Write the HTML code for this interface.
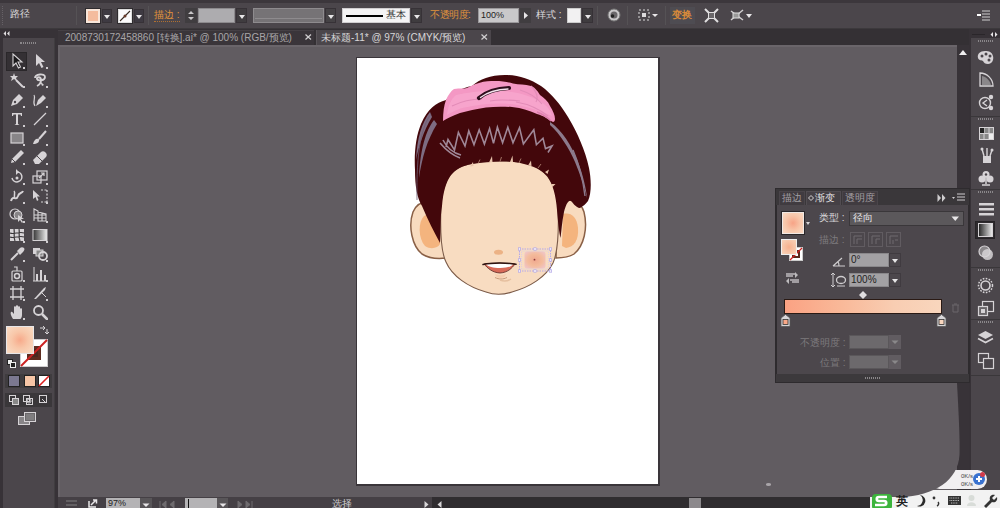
<!DOCTYPE html>
<html><head><meta charset="utf-8">
<style>
*{margin:0;padding:0;box-sizing:border-box}
html,body{width:1000px;height:508px;overflow:hidden;background:#615c61;font-family:"Liberation Sans",sans-serif;position:relative}
.a{position:absolute}
.t{position:absolute;white-space:nowrap;line-height:1}
.dd{position:absolute;background:#3f3c3f;border:1px solid #373237}
.dd:after{content:"";position:absolute;left:50%;top:50%;margin-left:-3px;margin-top:-1px;border-left:3px solid transparent;border-right:3px solid transparent;border-top:4px solid #e8e6e8}
.sep{position:absolute;top:6px;width:1px;height:19px;background:#3a373a;border-right:1px solid #555255}
svg{position:absolute;overflow:visible}
</style></head><body>
<!-- ============ top control bar ============ -->
<div class="a" style="left:0;top:0;width:1000px;height:3px;background:#3c373c"></div>
<div class="a" style="left:0;top:3px;width:1000px;height:26px;background:#4b464b;border-bottom:1px solid #3c393c"></div>
<div class="t" style="left:10px;top:9px;font-size:10px;color:#dcdadc">路径</div><div class="a" style="left:2px;top:6px;width:2px;height:19px;border-left:1px dotted #666166"></div>
<div class="sep" style="left:76px"></div>
<!-- fill swatch -->
<div class="a" style="left:86px;top:9px;width:14px;height:14px;background:#f4bc9e;border:2px solid #f8e6da;outline:1px solid #2e2b2e"></div>
<div class="dd" style="left:102px;top:9px;width:10px;height:14px;background:#3e3a42"></div>
<!-- stroke swatch -->
<div class="a" style="left:118px;top:9px;width:14px;height:14px;background:#fbfafb;border:1px solid #ddd;outline:1px solid #2e2b2e"></div>
<svg style="left:118px;top:9px" width="14" height="14"><line x1="2" y1="12" x2="12" y2="2" stroke="#3a2a22" stroke-width="1.1"/><circle cx="7" cy="7" r="1.5" fill="#6a3a2a"/></svg>
<div class="dd" style="left:134px;top:9px;width:10px;height:14px;background:#3e3a42"></div>
<div class="sep" style="left:148px"></div>
<div class="t" style="left:154px;top:10px;font-size:10px;color:#e0933c;border-bottom:1px dotted #b07030;padding-bottom:1px">描边 :</div>
<div class="a" style="left:185px;top:8px;width:12px;height:15px;background:#403d40"></div>
<svg style="left:185px;top:8px" width="12" height="15"><path d="M3 6 L6 3 L9 6Z M3 9 L6 12 L9 9Z" fill="#c8c6c8"/></svg>
<div class="a" style="left:198px;top:8px;width:37px;height:15px;background:#adacaf;border:1px solid #8c8a8d"></div>
<div class="dd" style="left:236px;top:8px;width:11px;height:15px"></div>
<!-- width profile -->
<div class="a" style="left:253px;top:8px;width:71px;height:15px;background:#767376;border:1px solid #8e8b8e"></div>
<div class="a" style="left:255px;top:18px;width:67px;height:1px;background:#8e8b8e"></div>
<div class="dd" style="left:325px;top:8px;width:11px;height:15px;background:#454245"></div>
<!-- stroke style -->
<div class="a" style="left:342px;top:8px;width:68px;height:15px;background:#f4f3f4;border:1px solid #cfcdcf"></div>
<div class="a" style="left:346px;top:15px;width:37px;height:2px;background:#000"></div>
<div class="t" style="left:386px;top:10px;font-size:10px;color:#333">基本</div>
<div class="dd" style="left:411px;top:8px;width:11px;height:15px"></div>
<div class="t" style="left:430px;top:10px;font-size:10px;letter-spacing:-.5px;color:#e0933c">不透明度:</div>
<div class="a" style="left:478px;top:8px;width:41px;height:15px;background:#c9c8ca;border:1px solid #9b999c"></div>
<div class="t" style="left:481px;top:11px;font-size:9px;color:#222">100%</div>
<div class="a" style="left:520px;top:8px;width:11px;height:15px;background:#403d40"></div>
<svg style="left:520px;top:8px" width="11" height="15"><path d="M4 4 L8 7.5 L4 11Z" fill="#e8e6e8"/></svg>
<div class="t" style="left:536px;top:10px;font-size:10px;color:#dcdadc">样式 :</div>
<div class="a" style="left:567px;top:8px;width:14px;height:15px;background:#f2f1f2;border:1px solid #ccc"></div>
<div class="dd" style="left:582px;top:8px;width:11px;height:15px"></div>
<div class="sep" style="left:597px"></div>
<svg style="left:607px;top:8px" width="14" height="14"><circle cx="7" cy="7" r="6" fill="#c9c7c9" stroke="#777" stroke-width="1"/><circle cx="7" cy="7" r="3.5" fill="#6a676a"/><circle cx="5.5" cy="8" r="1.8" fill="#222"/></svg>
<div class="sep" style="left:627px"></div>
<svg style="left:637px;top:8px" width="22" height="14"><rect x="2" y="2" width="10" height="10" fill="none" stroke="#dcdadc" stroke-dasharray="2 2"/><rect x="5" y="5" width="4" height="4" fill="#dcdadc"/><path d="M15 6 L21 6 L18 9Z" fill="#e8e6e8"/></svg>
<div class="sep" style="left:665px"></div>
<div class="a" style="left:670px;top:7px;width:25px;height:17px;background:#4e4c52"></div>
<div class="t" style="left:672px;top:10px;font-size:10px;color:#d88a3a;font-weight:bold">变换</div>
<svg style="left:704px;top:8px" width="15" height="15"><path d="M1 1 L5 5 M14 1 L10 5 M1 14 L5 10 M14 14 L10 10" stroke="#e0dee0" stroke-width="2"/><rect x="4.5" y="4.5" width="6" height="6" fill="#6a676a" stroke="#e0dee0"/></svg>
<svg style="left:729px;top:8px" width="24" height="15"><path d="M2 3 L14 12 M14 2 L2 12" stroke="#d0ced0" stroke-width="1.5"/><rect x="4" y="5" width="6" height="5" fill="#999" stroke="#ddd"/><path d="M17 6 L23 6 L20 10Z" fill="#e8e6e8"/></svg>
<svg style="left:977px;top:9px" width="14" height="13"><path d="M5 2 H13 M5 5 H13 M5 8 H13 M5 11 H13" stroke="#cfcdcf" stroke-width="1"/><path d="M0 6 L4 6" stroke="#fff" stroke-width="2"/></svg>

<!-- ============ tab bar ============ -->
<div class="a" style="left:58px;top:29px;width:911px;height:16px;background:#343034"></div>
<div class="a" style="left:58px;top:30px;width:256px;height:15px;background:#3a353a;border-top:1px solid #454045"></div>
<div class="t" style="left:65px;top:33px;font-size:10px;color:#a8a5a8">2008730172458860 [转换].ai* @ 100% (RGB/预览)</div>
<svg style="left:305px;top:34px" width="7" height="6"><path d="M0.5 0.5 L6 5.5 M6 0.5 L0.5 5.5" stroke="#d0ced0" stroke-width="1.2"/></svg>
<div class="a" style="left:316px;top:30px;width:175px;height:15px;background:#4b464b;border-left:1px solid #5a555a"></div>
<div class="t" style="left:321px;top:33px;font-size:10px;color:#d8d6d8">未标题-11* @ 97% (CMYK/预览)</div>
<svg style="left:481px;top:34px" width="7" height="6"><path d="M0.5 0.5 L6 5.5 M6 0.5 L0.5 5.5" stroke="#d0ced0" stroke-width="1.2"/></svg>

<!-- ============ canvas ============ -->
<div class="a" style="left:58px;top:45px;width:899px;height:452px;background:#615c61;border-top:2px solid #6a656a;border-left:2px solid #686368"></div>
<div class="a" style="left:356px;top:57px;width:304px;height:429px;background:#3a353a"></div>
<div class="a" style="left:357px;top:58px;width:301px;height:426px;background:#fff"></div>
<!-- face illustration -->
<svg style="left:0;top:0" width="1000" height="508" viewBox="0 0 1000 508">
<defs>
<radialGradient id="blush" cx="50%" cy="50%" r="60%"><stop offset="0" stop-color="#f0a88e"/><stop offset=".6" stop-color="#f4bc9c"/><stop offset="1" stop-color="#f0c4c4"/></radialGradient>
</defs>
<!-- ears -->
<path d="M443 205 C430 200 418 200 413 212 C408 226 412 246 422 254 C430 259 438 259 446 258 Z" fill="#f8dbbf" stroke="#8a6046" stroke-width="1.5"/>
<path d="M424 216 C418 222 418 238 425 246 C431 250 438 248 440 244 L440 218 C436 213 428 213 424 216Z" fill="#f4b47e"/>
<path d="M557 202 C568 198 580 199 584 212 C588 228 584 246 574 254 C568 258 562 258 556 258 Z" fill="#f8dbbf" stroke="#8a6046" stroke-width="1.5"/>
<path d="M563 214 C570 212 577 216 578 228 C579 240 574 247 566 248 L562 246 Z" fill="#f4b47e"/>
<!-- face -->
<path d="M441 205 C440 230 441 252 446 262 C452 276 468 287 486 292 C494 295 503 295 512 292 C530 287 546 277 553 263 C558 252 559 230 558 205 C556 185 548 168 525 163 C505 159 480 160 462 166 C448 172 442 188 441 205Z" fill="#f8dcc1" stroke="#7a5a48" stroke-width="1.1"/>
<!-- hair -->
<path d="M446 100 C436 103 428 108 421 124 C416 136 414 152 415 170 C415 186 417 198 422 206 C428 220 434 232 440 243 C441 230 440 218 442 206 C443 192 446 182 451 175 C456 169 462 166 472 164 C485 162 500 161 514 162 C528 164 540 168 547 176 C553 184 556 196 557 210 C558 222 559 232 560.5 238 C561.5 230 562 222 564 212 C566 204 569 198 572 202 C575 206 578 208 580 208 C583 206 586 204 588 201 C592 192 591 178 589 168 C585 150 578 134 568 117 C560 104 552 94 541 86 C530 79 518 75 505 75 C490 75 480 79 472 86 C462 88 452 92 446 100Z" fill="#43070b"/>
<!-- hair highlights -->
<path d="M430 112 C422 122 417 138 416 160 C419 146 423 132 432 117Z" fill="#7e6c82"/>
<path d="M434 120 C426 130 420 150 419 178 C422 158 427 140 437 124Z" fill="#7e6c82"/>
<path d="M431 114 C422 126 416 150 417 200" stroke="#6e5c72" stroke-width=".8" fill="none"/>
<path d="M550 122 C562 130 572 146 578 162 C583 175 586 188 587 198 C584 186 580 174 575 162 C569 148 560 134 550 125Z" fill="#8c7a8c"/>
<path d="M573 150 C579 164 583 180 585 196" stroke="#8c7a8c" stroke-width="1.4" fill="none"/>
<!-- zigzag bangs -->
<path d="M440 143 C446 150 452 155 460 158 M443 140 C447 148 453 153 461 155 M446 147 L448 139.5 L454.5 150 L458.4 132.4 L465 146 L468.8 131 L474 144.7 L479.2 129.8 L484.4 144 L489.6 128.5 L493.5 143.4 L497.4 127.2 L502.6 142.8 L507.8 127.2 L513 142.8 L519.5 127.8 L523.4 144 L533.8 129.8 L536.4 144.7 L543 138.2 L545.5 148.6 L552 146 L548 152.5" stroke="#a08898" stroke-width="1.6" fill="none" stroke-linejoin="miter"/>
<!-- forehead hairline wisps -->
<path d="M470 166.5 L473 162 L473.5 166Z M489 162.5 L492 156 L492.5 162Z M510 162 L512.5 155.5 L513 162Z M528 165.5 L531 160.5 L531.5 166Z M545 172 L549 169.5 L547.5 174Z M551 184 L555.5 184 L552.5 187Z" fill="#e8c4ac"/>
<path d="M478 164 L480 159.5 M500 161.5 L501.5 157 M519 163 L521 158.5 M538 168 L541 164" stroke="#e0b8a0" stroke-width=".6"/>
<!-- bow -->
<path d="M443 121 C443 112 444 105 446 100 C448 95 451 91 454 89 C460 88 464 89 467 88 C471 86 474 84 479 83 C485 81 490 81 495 81 C502 81 508 82 513 83.5 C519 85 525 84 531 86 C536 88 538 92 540 95 C544 98 548 101 550 106 C553 111 555 115 555 119 C555 121 554 122 553 122 C548 119 544 116 537 114 C530 111 522 108 512 107 C502 106.5 494 106.5 486 107.5 C476 109 468 111 460 113 C453 116 447 118 443 121Z" fill="#f498c4"/>
<path d="M456 95 C470 92 486 90 502 91 C518 92 532 96 544 104 C549 108 551 112 552 116 C543 112 532 108 518 105 C500 102 480 104 462 108 C456 110 450 113 447 115 C448 106 451 99 456 95Z" fill="#f9aed4" opacity=".55"/>
<path d="M452 106 C462 101 472 99 482 99 M520 90 C530 93 537 98 542 104 M516 102 C528 104 538 108 548 116 M490 101 C500 99 510 100 520 101 M531 86 C537 92 538 98 536 102" stroke="#e38cb8" stroke-width="1.1" fill="none"/>
<path d="M537 112 C542 114 547 117 551 121" stroke="#dc7eac" stroke-width="1.4" fill="none"/>
<!-- hair clip -->
<path d="M479 98 C486 92 497 88.5 509 88" stroke="#2e0e1c" stroke-width="4.2" fill="none" stroke-linecap="round"/>
<path d="M480.5 97.5 C487 92.5 497 89.5 508 89" stroke="#f4e4ee" stroke-width="1.4" fill="none" stroke-linecap="round"/>
<!-- nose -->
<ellipse cx="498.5" cy="252.3" rx="4.5" ry="2.5" fill="#ecb285"/>
<!-- mouth -->
<path d="M484 264 C493 262.8 506 262.8 515 264 C512 268 508 272.5 500 273 C492 272.5 487.5 268 484 264Z" fill="#d86a58" stroke="#5a2a26" stroke-width=".8"/>
<path d="M486 264.3 C494 263.4 506 263.4 513 264.3 C511.5 266.8 507 268 500 268 C493 268 488.5 266.8 486 264.3Z" fill="#fff"/>
<path d="M483 264.5 C492 262.6 507 262.6 516 264.3" stroke="#2e1410" stroke-width="1.5" fill="none" stroke-linecap="round"/>
<path d="M495 274 C499 275.5 503 275.5 506 274 C505 277 503 278 500.5 278 C498 278 496 277 495 274Z" fill="#f6cfb0"/>
<path d="M495 277.5 C499 279.5 503 279.5 507 277.5" stroke="#c89c7c" stroke-width="1" fill="none"/>
<path d="M500 280 C504 281.5 508 281 511 279" stroke="#e6c0a0" stroke-width="1.5" fill="none"/>
<!-- blush w/ selection -->
<rect x="524.5" y="251.5" width="21" height="17" rx="3" fill="url(#blush)"/>
<circle cx="534.5" cy="259.7" r=".9" fill="#8a3a3a"/>
<rect x="519.5" y="249" width="31" height="22" fill="none" stroke="#b4a8ea" stroke-width="1" stroke-dasharray="1.5 1"/>
<rect x="521.5" y="251" width="27" height="18" fill="none" stroke="#d0c8f2" stroke-width=".7" stroke-dasharray="1 1"/>
<g fill="#f4f2fc" stroke="#a89ce4" stroke-width=".6">
<rect x="518.3" y="247.8" width="2.4" height="2.4"/><rect x="533.8" y="247.8" width="2.4" height="2.4"/><rect x="549.3" y="247.8" width="2.4" height="2.4"/>
<rect x="518.3" y="258.8" width="2.4" height="2.4"/><rect x="549.3" y="258.8" width="2.4" height="2.4"/>
<rect x="518.3" y="269.8" width="2.4" height="2.4"/><rect x="533.8" y="269.8" width="2.4" height="2.4"/><rect x="549.3" y="269.8" width="2.4" height="2.4"/>
</g>
</svg>

<!-- vertical scrollbar -->
<div class="a" style="left:957px;top:45px;width:13px;height:452px;background:#383338"></div>
<svg style="left:957px;top:47px" width="12" height="10"><path d="M2 8 L6 3 L10 8Z" fill="#f0eef0"/></svg>

<!-- ============ status bar ============ -->
<div class="a" style="left:58px;top:497px;width:899px;height:11px;background:#302d30"></div>
<div class="a" style="left:58px;top:497px;width:374px;height:11px;background:#454045"></div>
<svg style="left:64px;top:499px" width="15" height="9"><path d="M2 2 H13 M2 6 H13" stroke="#6e6b6e" stroke-width="1.5"/></svg>
<svg style="left:88px;top:498px" width="10" height="10"><path d="M1 3 V9 H8" stroke="#e8e6e8" stroke-width="1.5" fill="none"/><path d="M3 7 L8 2 M5 2 H8.5 V5.5" stroke="#e8e6e8" stroke-width="1.5" fill="none"/></svg>
<div class="a" style="left:106px;top:498px;width:34px;height:10px;background:#b4b3b5"></div>
<div class="t" style="left:108px;top:499px;font-size:9px;color:#222">97%</div>
<div class="a" style="left:140px;top:498px;width:12px;height:10px;background:#585558"></div>
<svg style="left:142px;top:503px" width="8" height="5"><path d="M0.5 0.5 L7.5 0.5 L4 4Z" fill="#e8e6e8"/></svg>
<svg style="left:159px;top:501px" width="17" height="7"><path d="M1 0 V7 M7 0 L3 3.5 L7 7Z M15 0 L11 3.5 L15 7Z" stroke="#6e6b6e" fill="#6e6b6e"/></svg>
<div class="a" style="left:185px;top:498px;width:32px;height:10px;background:#b4b3b5"></div>
<div class="a" style="left:188px;top:499px;width:1px;height:9px;background:#111"></div>
<div class="a" style="left:217px;top:498px;width:11px;height:10px;background:#585558"></div>
<svg style="left:219px;top:503px" width="8" height="5"><path d="M0.5 0.5 L7.5 0.5 L4 4Z" fill="#e8e6e8"/></svg>
<svg style="left:236px;top:501px" width="17" height="7"><path d="M2 0 L6 3.5 L2 7Z M10 0 L14 3.5 L10 7Z M16 0 V7" stroke="#6e6b6e" fill="#6e6b6e"/></svg>
<div class="t" style="left:332px;top:499px;font-size:10px;color:#cfcdcf">选择</div>
<svg style="left:424px;top:501px" width="20" height="7"><path d="M0.5 0 L4.5 3.5 L0.5 7Z M17.5 0 L13.5 3.5 L17.5 7Z" fill="#d8d6d8"/></svg>
<div class="a" style="left:689px;top:498px;width:12px;height:10px;background:#8c898c"></div>

<!-- ============ left toolbar ============ -->
<div class="a" style="left:0;top:29px;width:58px;height:479px;background:#373237"></div>
<div class="a" style="left:3px;top:38px;width:52px;height:470px;background:#4b464b;border-right:1px solid #403d40"></div>
<svg style="left:3px;top:31px" width="7" height="5"><path d="M3 0 L0.5 2.5 L3 5Z M6.5 0 L4 2.5 L6.5 5Z" fill="#e0dee0"/></svg>
<div class="a" style="left:20px;top:42px;width:16px;height:2px;border-top:1px dotted #8a878a;border-bottom:1px dotted #8a878a"></div>
<div class="a" style="left:6px;top:52px;width:21px;height:19px;background:#343034;border:1px solid #2a272a"></div>
<svg style="left:9px;top:53px" width="16" height="16" viewBox="0 0 16 16"><path d="M4 1 L4 13 L7 10 L9.5 15 L11.5 14 L9 9 L13 9 Z" fill="#1a181a" stroke="#d6d3d6" stroke-width="1.1"/></svg>
<svg style="left:32px;top:53px" width="16" height="16" viewBox="0 0 16 16"><path d="M4 1 L4 13 L7 10 L9.5 15 L11.5 14 L9 9 L13 9 Z" fill="#d6d3d6"/></svg>
<div class="a" style="left:23px;top:67px;width:2px;height:2px;background:#cfcccf"></div>
<div class="a" style="left:46px;top:67px;width:2px;height:2px;background:#cfcccf"></div>
<svg style="left:9px;top:72px" width="16" height="16" viewBox="0 0 16 16"><path d="M7 8 L14 15" stroke="#d6d3d6" stroke-width="2"/><path d="M5 1 L6 4 L9 4 L7 6 L8 9 L5 7 L2 9 L3 6 L1 4 L4 4Z" fill="#d6d3d6"/></svg>
<svg style="left:32px;top:72px" width="16" height="16" viewBox="0 0 16 16"><path d="M3 6 C3 2 13 1 13 5 C13 9 6 9 5 7 C4 5 9 4 9 8 C9 11 7 13 5 14" stroke="#d6d3d6" stroke-width="1.8" fill="none"/><path d="M8 9 L12 13 L10 14Z" fill="#d6d3d6"/></svg>
<div class="a" style="left:23px;top:86px;width:2px;height:2px;background:#cfcccf"></div>
<div class="a" style="left:46px;top:86px;width:2px;height:2px;background:#cfcccf"></div>
<svg style="left:9px;top:92px" width="16" height="16" viewBox="0 0 16 16"><path d="M2 14 L4 8 L10 2 L14 6 L8 12 Z" fill="#d6d3d6"/><circle cx="6" cy="10" r="1.2" fill="#4b464b"/></svg>
<svg style="left:32px;top:92px" width="16" height="16" viewBox="0 0 16 16"><path d="M4 14 L6 8 L11 3 L14 6 L9 11 Z" fill="#d6d3d6"/><path d="M3 14 C0 10 4 6 2 3" stroke="#d6d3d6" stroke-width="1.2" fill="none"/></svg>
<div class="a" style="left:23px;top:106px;width:2px;height:2px;background:#cfcccf"></div>
<div class="a" style="left:46px;top:106px;width:2px;height:2px;background:#cfcccf"></div>
<svg style="left:9px;top:111px" width="16" height="16" viewBox="0 0 16 16"><path d="M3 2 H13 V5 H12 L11.5 3.5 H9 V13 L10.5 14 H5.5 L7 13 V3.5 H4.5 L4 5 H3Z" fill="#d6d3d6"/></svg>
<svg style="left:32px;top:111px" width="16" height="16" viewBox="0 0 16 16"><path d="M2 14 L14 2" stroke="#d6d3d6" stroke-width="1.3"/></svg>
<div class="a" style="left:23px;top:125px;width:2px;height:2px;background:#cfcccf"></div>
<div class="a" style="left:46px;top:125px;width:2px;height:2px;background:#cfcccf"></div>
<svg style="left:9px;top:130px" width="16" height="16" viewBox="0 0 16 16"><rect x="2" y="3" width="12" height="10" fill="#888588" stroke="#d6d3d6" stroke-width="1.2"/></svg>
<svg style="left:32px;top:130px" width="16" height="16" viewBox="0 0 16 16"><path d="M14 1 L7 9" stroke="#d6d3d6" stroke-width="2"/><path d="M1 14 C2 10 4 8 7 9 C8 12 5 14 1 14Z" fill="#d6d3d6"/></svg>
<div class="a" style="left:23px;top:144px;width:2px;height:2px;background:#cfcccf"></div>
<div class="a" style="left:46px;top:144px;width:2px;height:2px;background:#cfcccf"></div>
<svg style="left:9px;top:149px" width="16" height="16" viewBox="0 0 16 16"><path d="M2 14 L3 10 L12 1 L15 4 L6 13Z" fill="#d6d3d6"/><path d="M3 10 L6 13" stroke="#4b464b"/></svg>
<svg style="left:32px;top:149px" width="16" height="16" viewBox="0 0 16 16"><path d="M1 11 L9 3 C10 2 12 2 13 3 L14 4 C15 5 15 7 14 8 L7 15 L3 15 Z" fill="#d6d3d6"/><path d="M5 7 L10 12" stroke="#4b464b"/></svg>
<div class="a" style="left:23px;top:163px;width:2px;height:2px;background:#cfcccf"></div>
<div class="a" style="left:46px;top:163px;width:2px;height:2px;background:#cfcccf"></div>
<svg style="left:9px;top:169px" width="16" height="16" viewBox="0 0 16 16"><path d="M3 9 A5 5 0 1 0 7 3" stroke="#d6d3d6" stroke-width="1.5" fill="none"/><path d="M7 0 L10 3 L7 6Z" fill="#d6d3d6"/><circle cx="8" cy="9" r="1.5" fill="#d6d3d6"/></svg>
<svg style="left:32px;top:169px" width="16" height="16" viewBox="0 0 16 16"><rect x="1" y="7" width="8" height="7" fill="none" stroke="#d6d3d6" stroke-width="1.2"/><rect x="5" y="2" width="10" height="9" fill="none" stroke="#d6d3d6" stroke-width="1.2"/><path d="M7 9 L12 4 M9 4 H12 V7" stroke="#d6d3d6" stroke-width="1.2" fill="none"/></svg>
<div class="a" style="left:23px;top:183px;width:2px;height:2px;background:#cfcccf"></div>
<div class="a" style="left:46px;top:183px;width:2px;height:2px;background:#cfcccf"></div>
<svg style="left:9px;top:188px" width="16" height="16" viewBox="0 0 16 16"><path d="M2 13 C4 6 7 14 9 8 C10 4 13 6 14 3" stroke="#d6d3d6" stroke-width="2" fill="none"/><path d="M5 3 C7 5 4 8 6 10" stroke="#d6d3d6" stroke-width="1.5" fill="none"/></svg>
<svg style="left:32px;top:188px" width="16" height="16" viewBox="0 0 16 16"><path d="M1 2 L1 11 L3.5 9 L5 13 L6.5 12 L5 8.5 L8 8.5Z" fill="#d6d3d6"/><path d="M9 2 H15 M9 14 H15 M15 2 V14" stroke="#d6d3d6" stroke-width="1.2" stroke-dasharray="2 1.5"/></svg>
<div class="a" style="left:23px;top:202px;width:2px;height:2px;background:#cfcccf"></div>
<div class="a" style="left:46px;top:202px;width:2px;height:2px;background:#cfcccf"></div>
<svg style="left:9px;top:207px" width="16" height="16" viewBox="0 0 16 16"><circle cx="6" cy="7" r="5" fill="none" stroke="#d6d3d6" stroke-width="1.2"/><circle cx="9" cy="8" r="4" fill="#888588" stroke="#d6d3d6" stroke-width="1"/><path d="M9 8 L9 15 L11 13 L13 16 L14 15 L12 12 L15 12Z" fill="#d6d3d6"/></svg>
<svg style="left:32px;top:207px" width="16" height="16" viewBox="0 0 16 16"><path d="M2 14 V2 L6 4 V14 M6 14 V5 L14 7 V14 Z M2 8 H14 M2 11 H14 M10 6 V14" stroke="#d6d3d6" stroke-width="1.1" fill="none"/></svg>
<div class="a" style="left:23px;top:221px;width:2px;height:2px;background:#cfcccf"></div>
<div class="a" style="left:46px;top:221px;width:2px;height:2px;background:#cfcccf"></div>
<svg style="left:9px;top:227px" width="16" height="16" viewBox="0 0 16 16"><rect x="1" y="2" width="14" height="12" fill="#d6d3d6"/><path d="M1 6 C5 8 10 4 15 6 M1 10 C5 12 10 8 15 10 M5 2 C6 6 4 10 6 14 M10 2 C11 6 9 10 11 14" stroke="#3a373a" stroke-width="1.2" fill="none"/></svg>
<svg style="left:32px;top:227px" width="16" height="16" viewBox="0 0 16 16"><defs><linearGradient id="tg" x1="0" x2="1"><stop offset="0" stop-color="#333"/><stop offset="1" stop-color="#eee"/></linearGradient></defs><rect x="1" y="2.5" width="14" height="11" fill="url(#tg)" stroke="#d6d3d6" stroke-width="1"/></svg>
<div class="a" style="left:23px;top:241px;width:2px;height:2px;background:#cfcccf"></div>
<div class="a" style="left:46px;top:241px;width:2px;height:2px;background:#cfcccf"></div>
<svg style="left:9px;top:246px" width="16" height="16" viewBox="0 0 16 16"><path d="M2 14 L9 7" stroke="#d6d3d6" stroke-width="2"/><path d="M8 5 L11 2 C12 1 14 1 15 2 C16 3 15 5 14 6 L11 9Z" fill="#d6d3d6"/></svg>
<svg style="left:32px;top:246px" width="16" height="16" viewBox="0 0 16 16"><rect x="1" y="2" width="7" height="6" fill="#d6d3d6"/><rect x="4" y="4" width="7" height="6" fill="#888" stroke="#d6d3d6"/><circle cx="11" cy="10" r="4" fill="none" stroke="#d6d3d6" stroke-width="1.8"/></svg>
<div class="a" style="left:23px;top:260px;width:2px;height:2px;background:#cfcccf"></div>
<div class="a" style="left:46px;top:260px;width:2px;height:2px;background:#cfcccf"></div>
<svg style="left:9px;top:266px" width="16" height="16" viewBox="0 0 16 16"><rect x="3" y="5" width="10" height="10" rx="1" fill="none" stroke="#d6d3d6" stroke-width="1.2"/><circle cx="8" cy="10" r="2.5" fill="none" stroke="#d6d3d6" stroke-width="1.5"/><path d="M5 1 H8 V5" stroke="#d6d3d6" stroke-width="1.2" fill="none"/></svg>
<svg style="left:32px;top:266px" width="16" height="16" viewBox="0 0 16 16"><path d="M1 15 H15 M2 15 V1" stroke="#d6d3d6" stroke-width="1"/><rect x="4" y="8" width="2" height="7" fill="#d6d3d6"/><rect x="8" y="4" width="2" height="11" fill="#d6d3d6"/><rect x="12" y="9" width="2" height="6" fill="#d6d3d6"/></svg>
<div class="a" style="left:23px;top:280px;width:2px;height:2px;background:#cfcccf"></div>
<div class="a" style="left:46px;top:280px;width:2px;height:2px;background:#cfcccf"></div>
<svg style="left:9px;top:285px" width="16" height="16" viewBox="0 0 16 16"><path d="M4 1 V15 M12 1 V15 M1 4 H15 M1 12 H15" stroke="#d6d3d6" stroke-width="1.3"/></svg>
<svg style="left:32px;top:285px" width="16" height="16" viewBox="0 0 16 16"><path d="M2 14 L12 3 L14 2 L13 5 L4 14Z" fill="#d6d3d6"/><path d="M10 8 L14 12" stroke="#d6d3d6" stroke-width="1"/></svg>
<div class="a" style="left:23px;top:299px;width:2px;height:2px;background:#cfcccf"></div>
<div class="a" style="left:46px;top:299px;width:2px;height:2px;background:#cfcccf"></div>
<svg style="left:9px;top:304px" width="16" height="16" viewBox="0 0 16 16"><path d="M4 15 C2 12 1 9 2 8 C3 7 4 9 5 10 V3 C5 2 7 2 7 3 V8 V2 C7 1 9 1 9 2 V8 V3 C9 2 11 2 11 3 V8 V5 C11 4 13 4 13 5 V11 C13 13 12 15 11 15Z" fill="#d6d3d6"/></svg>
<svg style="left:32px;top:304px" width="16" height="16" viewBox="0 0 16 16"><circle cx="6.5" cy="6.5" r="4.5" fill="none" stroke="#d6d3d6" stroke-width="1.8"/><path d="M10 10 L15 15" stroke="#d6d3d6" stroke-width="2.5"/></svg>
<div class="a" style="left:23px;top:318px;width:2px;height:2px;background:#cfcccf"></div>
<div class="a" style="left:46px;top:318px;width:2px;height:2px;background:#cfcccf"></div>

<!-- fill / stroke -->
<div class="a" style="left:20px;top:339px;width:28px;height:28px;background:#fff;border:1px solid #cfcdcf"></div>
<div class="a" style="left:27px;top:346px;width:14px;height:14px;background:#4a2820;border:3px solid #5e2c20"></div>
<svg style="left:20px;top:339px" width="28" height="28"><line x1="1" y1="27" x2="27" y2="1" stroke="#cc2222" stroke-width="2"/></svg>
<div class="a" style="left:6px;top:326px;width:28px;height:28px;border:1px solid #e8e6e8;background:radial-gradient(circle at 50% 50%,#f7a98a 0%,#f8c7a9 45%,#f9dcc5 100%)"></div>
<svg style="left:39px;top:326px" width="9" height="9"><path d="M1 2 H6 L4 0 M6 2 L4 4 M8 3 V8 L6 6 M8 8 L10 6" stroke="#d6d3d6" stroke-width="1" fill="none"/></svg>
<svg style="left:7px;top:359px" width="10" height="9"><rect x="0.5" y="0.5" width="5" height="5" fill="#eee" stroke="#222"/><rect x="3.5" y="3.5" width="5" height="5" fill="#222" stroke="#eee"/></svg>
<!-- modes -->
<div class="a" style="left:5px;top:374px;width:47px;height:14px;background:#3f3c3f"></div>
<div class="a" style="left:8px;top:375px;width:12px;height:12px;background:#7b7890;border:1px solid #222"></div>
<div class="a" style="left:24px;top:375px;width:12px;height:12px;background:#f6c5a6;border:1px solid #222"></div>
<div class="a" style="left:38px;top:375px;width:12px;height:12px;background:#fff;border:1px solid #222"></div>
<svg style="left:38px;top:375px" width="12" height="12"><line x1="1" y1="11" x2="11" y2="1" stroke="#d22" stroke-width="1.6"/></svg>
<div class="a" style="left:5px;top:393px;width:47px;height:14px;background:#3a373a"></div>
<svg style="left:8px;top:394px" width="44" height="12"><g fill="none" stroke="#d6d3d6" stroke-width="1"><rect x="1.5" y="1.5" width="6" height="6"/><rect x="4.5" y="4.5" width="6" height="6" fill="#888"/><rect x="15.5" y="1.5" width="6" height="6"/><rect x="18.5" y="4.5" width="6" height="6"/><circle cx="21" cy="7" r="2"/><rect x="31.5" y="1.5" width="7" height="7"/><path d="M34 5 L38 9"/></g></svg>
<svg style="left:18px;top:412px" width="19" height="14"><rect x="0.5" y="4.5" width="11" height="8" fill="#888588" stroke="#d6d3d6"/><rect x="6.5" y="0.5" width="11" height="9" fill="#6a676a" stroke="#d6d3d6"/><path d="M8 3 H16 M8 5 H16 M8 7 H16" stroke="#aaa" stroke-width=".7"/></svg>

<!-- ============ right dock ============ -->
<div class="a" style="left:969px;top:29px;width:31px;height:479px;background:#373237"></div>
<div class="a" style="left:971px;top:38px;width:29px;height:470px;background:#4b464b"></div>
<svg style="left:990px;top:31.5px" width="8" height="5"><path d="M3 0 L0.5 2.5 L3 5Z M5 0 L7.5 2.5 L5 5Z" fill="#e8e6e8"/></svg><div class="a" style="left:972px;top:34px;width:13px;height:1px;background:#2a262a"></div>
<div class="a" style="left:971px;top:116px;width:29px;height:1px;background:#3a373a"></div>
<div class="a" style="left:971px;top:189px;width:29px;height:1px;background:#3a373a"></div>
<div class="a" style="left:971px;top:267px;width:29px;height:1px;background:#3a373a"></div>
<div class="a" style="left:971px;top:319px;width:29px;height:1px;background:#3a373a"></div>
<div class="a" style="left:971px;top:375px;width:29px;height:1px;background:#3a373a"></div>
<div class="a" style="left:978px;top:40px;width:15px;height:2px;border-top:1px dotted #8a878a;border-bottom:1px dotted #8a878a"></div>
<div class="a" style="left:978px;top:118px;width:15px;height:2px;border-top:1px dotted #8a878a;border-bottom:1px dotted #8a878a"></div>
<div class="a" style="left:978px;top:191px;width:15px;height:2px;border-top:1px dotted #8a878a;border-bottom:1px dotted #8a878a"></div>
<div class="a" style="left:978px;top:269px;width:15px;height:2px;border-top:1px dotted #8a878a;border-bottom:1px dotted #8a878a"></div>
<div class="a" style="left:978px;top:321px;width:15px;height:2px;border-top:1px dotted #8a878a;border-bottom:1px dotted #8a878a"></div>
<!-- palette -->
<svg style="left:977px;top:50px" width="17" height="15"><path d="M8 1 C3 1 0 4 1 8 C2 11 5 10 6 11 C7 13 8 14 11 14 C15 14 17 10 16 6 C15 2 12 1 8 1Z" fill="#d6d3d6"/><circle cx="5" cy="6" r="1.5" fill="#4b464b"/><circle cx="9" cy="4" r="1.5" fill="#4b464b"/><circle cx="13" cy="6" r="1.5" fill="#4b464b"/><circle cx="12" cy="10" r="1.5" fill="#4b464b"/></svg>
<!-- color guide -->
<svg style="left:979px;top:72px" width="15" height="15"><path d="M1 1 V14 H14 C14 7 8 1 1 1Z" fill="none" stroke="#d6d3d6" stroke-width="1.3"/><path d="M3 13 L3 4 C8 5 11 9 12 13Z" fill="#8a878a"/></svg>
<!-- kuler -->
<svg style="left:978px;top:94px" width="16" height="17"><circle cx="7" cy="9" r="5.5" fill="none" stroke="#d6d3d6" stroke-width="1.4"/><path d="M9 6 L5 9 L9 12" stroke="#d6d3d6" stroke-width="1.4" fill="none"/><circle cx="13" cy="3" r="2.2" fill="#d6d3d6"/><circle cx="13" cy="14" r="2.2" fill="#d6d3d6"/></svg>
<!-- swatches -->
<svg style="left:979px;top:127px" width="15" height="13"><rect x="0.5" y="0.5" width="14" height="12" fill="#888" stroke="#d6d3d6"/><path d="M5 0 V13 M10 0 V13 M0 6.5 H15" stroke="#d6d3d6"/><rect x="1" y="1" width="4" height="5" fill="#222"/><rect x="10" y="7" width="4" height="5" fill="#eee"/></svg>
<!-- brushes -->
<svg style="left:979px;top:147px" width="15" height="17"><rect x="4" y="9" width="8" height="7" fill="#d6d3d6"/><path d="M5 9 L3 2 M8 9 V1 M11 9 L13 3" stroke="#d6d3d6" stroke-width="1.4"/><circle cx="3" cy="2" r="1.5" fill="#d6d3d6"/><circle cx="13" cy="3" r="1.5" fill="#d6d3d6"/></svg>
<!-- symbols -->
<svg style="left:978px;top:170px" width="16" height="16"><circle cx="8" cy="4.5" r="3.5" fill="#d6d3d6"/><circle cx="4" cy="9" r="3.5" fill="#d6d3d6"/><circle cx="12" cy="9" r="3.5" fill="#d6d3d6"/><path d="M8 8 V14 M4 15 H12" stroke="#d6d3d6" stroke-width="1.5"/><circle cx="8" cy="4.5" r="1.2" fill="#4b464b"/></svg>
<!-- stroke -->
<svg style="left:979px;top:202px" width="15" height="15"><rect x="0" y="1" width="15" height="2.5" fill="#d6d3d6"/><rect x="0" y="6" width="15" height="2.5" fill="#d6d3d6"/><rect x="0" y="11" width="15" height="2.5" fill="#d6d3d6"/></svg>
<!-- gradient selected -->
<div class="a" style="left:975px;top:221px;width:20px;height:18px;background:#2e2b2e;border:1px solid #262326"></div>
<svg style="left:978px;top:223px" width="15" height="14"><defs><linearGradient id="dg" x1="0" x2="1"><stop offset="0" stop-color="#222"/><stop offset="1" stop-color="#eee"/></linearGradient></defs><rect x="0.5" y="0.5" width="14" height="13" fill="url(#dg)" stroke="#d6d3d6"/></svg>
<!-- transparency -->
<svg style="left:978px;top:245px" width="16" height="16"><circle cx="6.5" cy="6.5" r="5.5" fill="#8a878a" stroke="#d6d3d6" stroke-width="1.2"/><circle cx="9.5" cy="9.5" r="5.5" fill="#d6d3d6" opacity=".85"/></svg>
<!-- appearance -->
<svg style="left:977px;top:277px" width="17" height="17"><circle cx="8.5" cy="8.5" r="4.5" fill="none" stroke="#d6d3d6" stroke-width="1.6"/><circle cx="8.5" cy="8.5" r="7" fill="none" stroke="#d6d3d6" stroke-width="1.5" stroke-dasharray="1.6 1.4"/></svg>
<!-- graphic styles -->
<svg style="left:978px;top:301px" width="16" height="16"><rect x="4.5" y="0.5" width="11" height="10" fill="none" stroke="#d6d3d6" stroke-width="1.2"/><rect x="0.5" y="5.5" width="9" height="9" fill="#6a676a" stroke="#d6d3d6" stroke-width="1.2"/><rect x="3" y="8" width="4" height="4" fill="#d6d3d6"/></svg>
<!-- layers -->
<svg style="left:977px;top:330px" width="17" height="16"><path d="M8.5 1 L16 5 L8.5 9 L1 5Z" fill="#d6d3d6"/><path d="M1 8.5 L8.5 12.5 L16 8.5" stroke="#d6d3d6" stroke-width="1.6" fill="none"/></svg>
<!-- artboards -->
<svg style="left:978px;top:353px" width="16" height="16"><rect x="0.5" y="0.5" width="10" height="9" fill="none" stroke="#d6d3d6" stroke-width="1.2"/><rect x="5.5" y="5.5" width="10" height="10" fill="#4b464b" stroke="#d6d3d6" stroke-width="1.2"/></svg>

<!-- ============ gradient panel ============ -->
<div class="a" style="left:775px;top:188px;width:195px;height:195px;background:#2e2b2e"></div>
<div class="a" style="left:776px;top:189px;width:193px;height:16px;background:#3a373a"></div>
<div class="a" style="left:777px;top:205px;width:191px;height:169px;background:#4c474c"></div>
<div class="a" style="left:776px;top:374px;width:193px;height:8px;background:#3c393c"></div>
<div class="a" style="left:865px;top:377px;width:15px;height:2px;border-top:1px dotted #8a878a;border-bottom:1px dotted #8a878a"></div>
<!-- tabs -->
<div class="a" style="left:779px;top:191px;width:26px;height:14px;background:#403b40;border:1px solid #4a454a;border-bottom:none"></div>
<div class="t" style="left:782px;top:193px;font-size:10px;color:#a29fa2">描边</div>
<div class="a" style="left:806px;top:191px;width:35px;height:14px;background:#454045;border:1px solid #524d52;border-bottom:none"></div>
<svg style="left:808px;top:195px" width="6" height="6"><path d="M3 0.5 L5.5 3 L3 5.5 L0.5 3Z" fill="none" stroke="#d8d6d8" stroke-width="1"/></svg>
<div class="t" style="left:815px;top:193px;font-size:10px;color:#e4e2e4">渐变</div>
<div class="a" style="left:842px;top:191px;width:36px;height:14px;background:#403b40;border:1px solid #4a454a;border-bottom:none"></div>
<div class="t" style="left:845px;top:193px;font-size:10px;color:#a29fa2">透明度</div>
<svg style="left:937px;top:194px" width="10" height="8"><path d="M0.5 0 L4 4 L0.5 8Z M5 0 L8.5 4 L5 8Z" fill="#cfcdcf"/></svg>
<svg style="left:952px;top:193px" width="14" height="10"><path d="M0 4 L3 4 L1.5 6Z" fill="#cfcdcf"/><path d="M5 1 H13 M5 4 H13 M5 7 H13" stroke="#cfcdcf" stroke-width="1"/></svg>
<!-- gradient swatch -->
<div class="a" style="left:781px;top:211px;width:24px;height:24px;background:#2a272a"></div>
<div class="a" style="left:782px;top:212px;width:22px;height:22px;border:1px solid #f0e8e4;background:radial-gradient(circle at 50% 50%,#f7a386 0%,#f8c4a7 50%,#f9dac4 100%)"></div>
<svg style="left:806px;top:222px" width="5" height="4"><path d="M0 0 L4 0 L2 3Z" fill="#d8d6d8"/></svg>
<div class="t" style="left:819px;top:213px;font-size:10px;color:#d8d6d8">类型 :</div>
<div class="a" style="left:849px;top:211px;width:115px;height:15px;background:#5b585b;border:1px solid #3a373a"></div>
<div class="t" style="left:853px;top:213px;font-size:10px;color:#e8e6e8">径向</div>
<svg style="left:951px;top:216px" width="9" height="6"><path d="M0.5 0.5 L8 0.5 L4.25 5Z" fill="#e8e6e8"/></svg>
<!-- fill/stroke small -->
<div class="a" style="left:781px;top:239px;width:16px;height:16px;border:1px solid #ddd;background:radial-gradient(circle,#f7b08e,#f8d4bb)"></div>
<div class="a" style="left:789px;top:247px;width:14px;height:14px;background:#fff;border:1px solid #ccc"></div>
<div class="a" style="left:792px;top:250px;width:8px;height:8px;border:2px solid #5a2a1e;background:#fff"></div>
<svg style="left:789px;top:247px" width="14" height="14"><line x1="1" y1="13" x2="13" y2="1" stroke="#c22" stroke-width="1.3"/></svg>
<div class="a" style="left:781px;top:239px;width:16px;height:16px;border:1px solid #eee;background:radial-gradient(circle,#f7b08e,#f8d4bb)"></div>
<!-- stroke buttons row -->
<div class="t" style="left:819px;top:235px;font-size:10px;color:#7e7b7e">描边 :</div>
<div class="a" style="left:850px;top:232px;width:15px;height:15px;border:1px solid #615c61"></div>
<div class="a" style="left:868px;top:232px;width:15px;height:15px;border:1px solid #615c61"></div>
<div class="a" style="left:886px;top:232px;width:15px;height:15px;border:1px solid #615c61"></div>
<svg style="left:850px;top:232px" width="52" height="15"><path d="M4 12 V4 H12 M7 12 V7 H12 M22 12 V4 H30 M26 12 V7 H30 M40 12 V4 H48 M43 12 V8 M45 8 H48" stroke="#6e6b6e" stroke-width="1" fill="none"/></svg>
<!-- swap icon -->
<svg style="left:785px;top:271px" width="15" height="14"><path d="M1 3 H10 M1 5 H8 M5 9 H14 M7 11 H14" stroke="#bdbbbd" stroke-width="1.3"/><path d="M10 1 L13 4 L10 7Z M4 7 L1 10 L4 13Z" fill="#bdbbbd"/></svg>
<!-- angle -->
<svg style="left:832px;top:256px" width="14" height="12"><path d="M1 10 H13 M1 10 L10 2 M6 6 C7 7 7 9 7 10" stroke="#cfcdcf" stroke-width="1.2" fill="none"/></svg>
<div class="a" style="left:849px;top:253px;width:40px;height:14px;background:#a3a1a4;border:1px solid #8a888b"></div>
<div class="t" style="left:851px;top:255px;font-size:10px;color:#222">0°</div>
<div class="dd" style="left:889px;top:253px;width:12px;height:14px;background:#4c474c;border-color:#403b40"></div>
<!-- ratio -->
<svg style="left:831px;top:272px" width="16" height="16"><path d="M2 1 V15 M0 3 L2 1 L4 3 M0 13 L2 15 L4 13" stroke="#cfcdcf" stroke-width="1" fill="none"/><ellipse cx="10" cy="8" rx="4.5" ry="3.5" fill="none" stroke="#cfcdcf" stroke-width="1.3"/><path d="M6 14 H14" stroke="#cfcdcf"/></svg>
<div class="a" style="left:849px;top:273px;width:40px;height:14px;background:#a3a1a4;border:1px solid #8a888b"></div>
<div class="t" style="left:851px;top:275px;font-size:10px;color:#222">100%</div>
<div class="dd" style="left:889px;top:273px;width:12px;height:14px;background:#4c474c;border-color:#403b40"></div>
<!-- midpoint diamond -->
<svg style="left:859px;top:291px" width="8" height="8"><path d="M4 0 L8 4 L4 8 L0 4Z" fill="#e0dee0"/></svg>
<!-- gradient bar -->
<div class="a" style="left:784px;top:299px;width:158px;height:15px;background:#2a1a14"></div>
<div class="a" style="left:785px;top:300px;width:156px;height:13px;background:linear-gradient(90deg,#fba283 0%,#f9b898 35%,#f8cdb2 70%,#f9d6bd 100%)"></div>
<svg style="left:780px;top:314px" width="11" height="13"><path d="M5.5 0.5 L10 4 V12.5 H1 V4Z" fill="#d8d6d8" stroke="#555" stroke-width=".8"/><rect x="3" y="5.5" width="5" height="5" fill="#f9a888" stroke="#333" stroke-width=".8"/></svg>
<svg style="left:936px;top:314px" width="11" height="13"><path d="M5.5 0.5 L10 4 V12.5 H1 V4Z" fill="#d8d6d8" stroke="#555" stroke-width=".8"/><rect x="3" y="5.5" width="5" height="5" fill="#f8d6be" stroke="#333" stroke-width=".8"/></svg>
<svg style="left:951px;top:303px" width="9" height="10"><path d="M1 2 H8 M2 2 V9 H7 V2 M3 1 H6" stroke="#6a676a" stroke-width="1" fill="none"/></svg>
<!-- opacity / location -->
<div class="t" style="left:800px;top:338px;font-size:10px;color:#7e7b7e">不透明度 :</div>
<div class="a" style="left:849px;top:335px;width:40px;height:14px;background:#6c696c;border:1px solid #5a575a"></div>
<div class="a" style="left:889px;top:335px;width:12px;height:14px;background:#615c61"></div>
<svg style="left:891px;top:340px" width="8" height="5"><path d="M0.5 0.5 L7.5 0.5 L4 4Z" fill="#8a888a"/></svg>
<div class="t" style="left:820px;top:358px;font-size:10px;color:#7e7b7e">位置 :</div>
<div class="a" style="left:849px;top:355px;width:40px;height:14px;background:#6c696c;border:1px solid #5a575a"></div>
<div class="a" style="left:889px;top:355px;width:12px;height:14px;background:#615c61"></div>
<svg style="left:891px;top:360px" width="8" height="5"><path d="M0.5 0.5 L7.5 0.5 L4 4Z" fill="#8a888a"/></svg>

<div class="a" style="left:766px;top:483px;width:5px;height:2.5px;border-radius:50%;background:#a9a5a9"></div>
<!-- bottom-right IME overlay -->
<div class="a" style="left:930px;top:470px;width:57px;height:19px;border-radius:10px;background:#f1eff1"></div>
<div class="t" style="left:961px;top:473px;font-size:6px;color:#444">0K/s</div>
<div class="t" style="left:961px;top:481px;font-size:6px;color:#444">0K/s</div>
<div class="a" style="left:973px;top:473px;width:12px;height:12px;border-radius:50%;background:#3a72d0"></div>
<div class="a" style="left:976px;top:478px;width:6px;height:2px;background:#fff"></div>
<div class="a" style="left:978px;top:476px;width:2px;height:6px;background:#fff"></div>
<div class="a" style="left:980px;top:472px;width:5px;height:5px;border-radius:50%;background:#d23a4a"></div>
<div class="a" style="left:870px;top:490px;width:130px;height:18px;background:#f2f2f2"></div>
<svg style="left:0;top:0" width="1000" height="508"><path d="M850 383 H957 C958.5 410 960 440 959.5 455 C958 480 935 496 900 497 H850Z" fill="#615c61"/></svg>
<svg style="left:870px;top:490px" width="130" height="18">
<rect x="2" y="4" width="20" height="16" rx="4" fill="#3cb43c"/>
<path d="M17 7 H9 C6 7 6 11 9 11 H14 C17 11 17 15 14 15 H5" stroke="#fff" stroke-width="2.6" fill="none"/>
<text x="26" y="15" font-size="12" fill="#222" font-weight="bold">英</text>
<path d="M50 5 A5.8 5.8 0 1 1 47 16 A6 6 0 0 0 50 5Z" fill="#2a2a2a"/>
<circle cx="64" cy="8" r="1.4" fill="#333"/><path d="M68 12 C69 13 69 15 67 16" stroke="#333" stroke-width="1.5" fill="none"/>
<rect x="78" y="6" width="13" height="9" fill="#333"/><path d="M79.5 8 H89.5 M79.5 10.5 H89.5 M81 13 H88" stroke="#ddd" stroke-width=".8" stroke-dasharray="1 .7"/>
<circle cx="101.5" cy="8" r="3" fill="#d8dcd8"/><path d="M97 16 C97 11 106 11 106 16Z" fill="#d8dcd8"/>
<path d="M114 16 L120 10 C119 7 121 4 125 5 L122 8 L124 10 L127 7 C128 11 125 13 122 12 L116 18Z" fill="#333"/>
</svg>
</body></html>
